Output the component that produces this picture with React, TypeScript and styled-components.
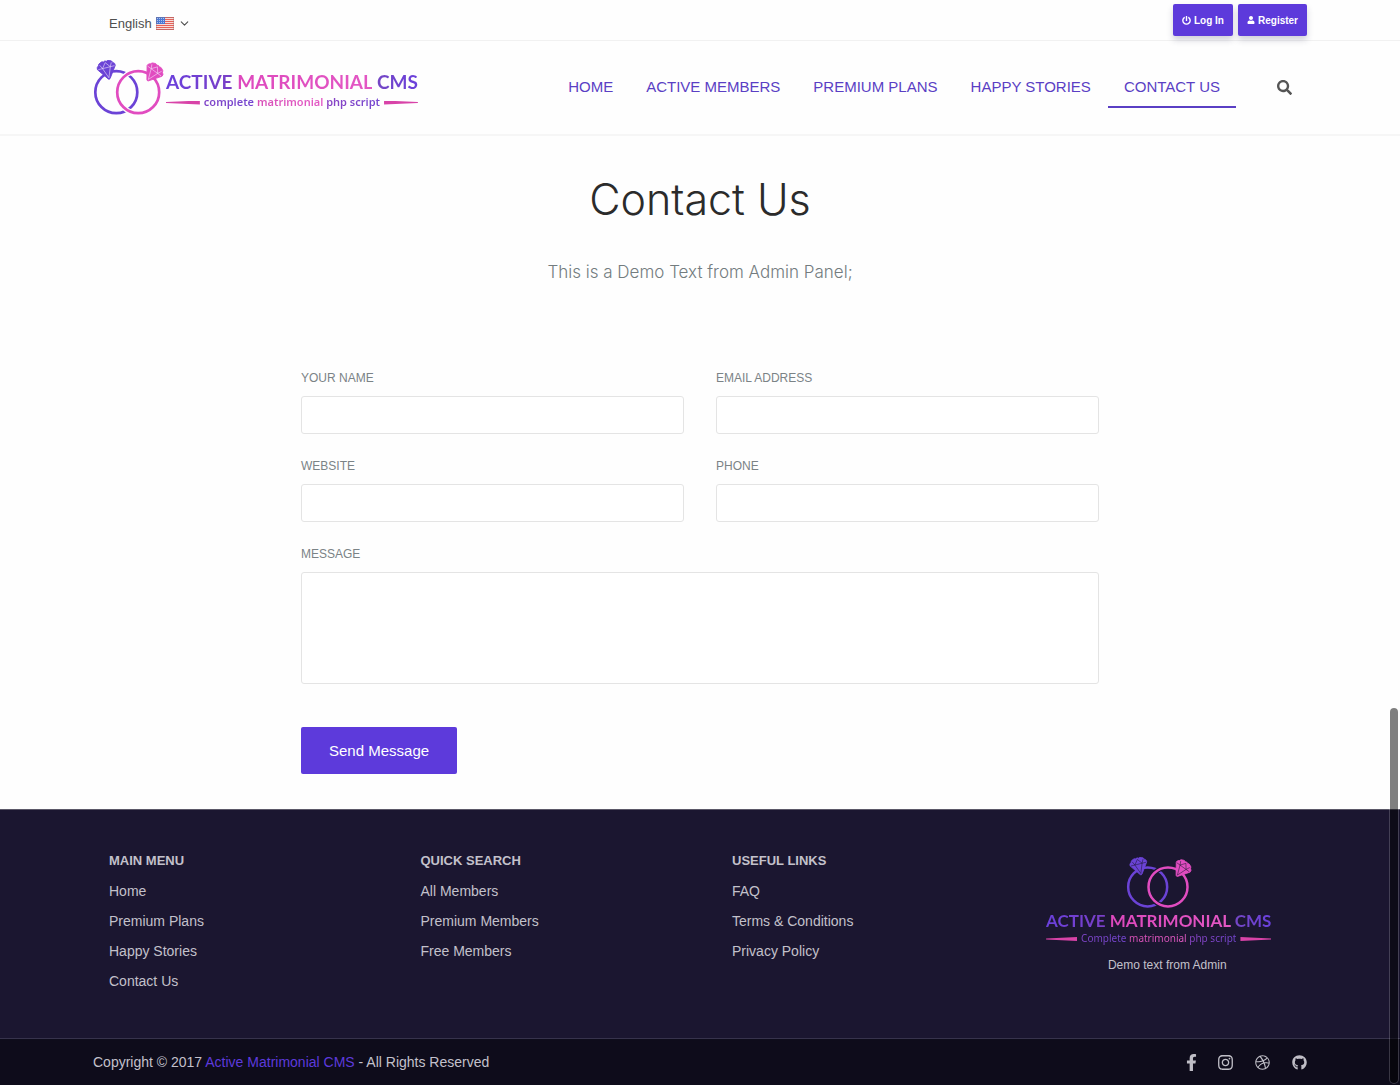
import React, { useId } from "react";
import styled, { createGlobalStyle, css } from "styled-components";
import {
  FaDribbble,
  FaFacebookF,
  FaGithub,
  FaInstagram,
  FaPowerOff,
  FaSearch,
  FaUser,
} from "react-icons/fa";
import { FiChevronDown } from "react-icons/fi";

const PURPLE = "#5d3adb";
const VIOLET = "#6b43d6";
const PINK = "#e14cc0";

const GlobalStyle = createGlobalStyle`
  *, *::before, *::after { box-sizing: border-box; }
  body {
    margin: 0;
    background: #fefefe;
    color: #4a4a4a;
    font-family: "Liberation Sans", Arial, Helvetica, sans-serif;
    font-size: 14px;
  }
  a { color: inherit; text-decoration: none; }
  button, input, textarea { font-family: inherit; }
`;

const Container = styled.div`
  width: 100%;
  max-width: 1246px;
  margin: 0 auto;
  padding: 0 16px;
`;

/* ---------- top bar ---------- */

const TopBar = styled.div`
  border-bottom: 1px solid #f1f1f1;
`;

const TopBarInner = styled(Container)`
  display: flex;
  justify-content: space-between;
  align-items: flex-start;
  height: 40px;
  padding-top: 4px;
`;

const LanguageButton = styled.button`
  display: flex;
  align-items: center;
  gap: 4px;
  height: 38px;
  padding: 0 16px;
  border: 0;
  background: none;
  color: #4f4f4f;
  font-size: 13px;
  cursor: pointer;
`;

const AccountActions = styled.div`
  display: flex;
  gap: 5px;
`;

const AccountLink = styled.a`
  display: flex;
  align-items: center;
  gap: 3px;
  height: 32px;
  padding: 0 9px;
  border-radius: 2px;
  background: ${PURPLE};
  box-shadow: 0 4px 6px rgba(50, 50, 93, 0.22);
  color: #fff;
  font-size: 10px;
  font-weight: 700;
`;

/* ---------- header ---------- */

const Header = styled.header`
  border-bottom: 2px solid #f6f6f6;
`;

const HeaderInner = styled(Container)`
  display: flex;
  justify-content: space-between;
  align-items: center;
  height: 93px;
`;

const Nav = styled.nav`
  display: flex;
  align-items: center;
  gap: 1px;
`;

const NavLink = styled.a<{ $active?: boolean }>`
  padding: 0 16px;
  border-bottom: 2px solid ${({ $active }) => ($active ? "#5a3fc4" : "transparent")};
  color: #5a3fc4;
  font-size: 15px;
  line-height: 38px;
`;

const SearchButton = styled.button`
  display: flex;
  margin-left: 40px;
  margin-right: 15px;
  padding: 0;
  border: 0;
  background: none;
  color: #555;
  cursor: pointer;
`;

/* ---------- logo ---------- */

const LogoLink = styled.a<{ $stacked?: boolean }>`
  display: flex;
  align-items: center;
  gap: 2px;
  ${({ $stacked }) =>
    $stacked &&
    css`
      flex-direction: column;
      padding-right: 17px;
    `}
`;

const LogoWords = styled.span<{ $small?: boolean }>`
  display: flex;
  flex-direction: column;
  padding-top: ${({ $small }) => ($small ? 0 : 6)}px;
`;

const LogoName = styled.span<{ $small?: boolean }>`
  font-family: Lato, "Open Sans", sans-serif;
  font-size: ${({ $small }) => ($small ? 17 : 19)}px;
  line-height: ${({ $small }) => ($small ? 20 : 22)}px;
  font-weight: 700;
  white-space: nowrap;
`;

const LogoTagline = styled.span<{ $small?: boolean }>`
  display: flex;
  align-items: center;
  gap: 4px;
  font-family: "Noto Sans", "Open Sans", sans-serif;
  font-size: ${({ $small }) => ($small ? 10 : 11)}px;
  line-height: ${({ $small }) => ($small ? 14 : 18)}px;
  font-weight: ${({ $small }) => ($small ? 400 : 600)};
  white-space: nowrap;
`;

const Tint = styled.span<{ $from: string; $to: string }>`
  background: linear-gradient(90deg, ${({ $from }) => $from}, ${({ $to }) => $to});
  background-clip: text;
  -webkit-background-clip: text;
  color: transparent;
`;

const Ribbon = styled.span<{ $flip?: boolean }>`
  flex: 1;
  height: 4px;
  margin-top: 2px;
  background: #d843a8;
  clip-path: ${({ $flip }) =>
    $flip
      ? "polygon(0 0, 100% 35%, 100% 65%, 0 100%)"
      : "polygon(0 35%, 100% 0, 100% 100%, 0 65%)"};
`;

function Gem({ x, y, tilt, fill, line }: { x: number; y: number; tilt: number; fill: string; line: string }) {
  return (
    <g transform={`translate(${x} ${y}) rotate(${tilt})`}>
      <path
        d="M-5 -8.5 Q-3 -9.8 -1.5 -8.6 Q0 -10 1.5 -8.6 Q3 -9.8 5 -8.5 Q7 -8 7.4 -6 Q9.6 -5 9.2 -2.6 L1 9 Q0 10 -1 9 L-9.2 -2.6 Q-9.6 -5 -7.4 -6 Q-7 -8 -5 -8.5 Z"
        fill={fill}
        stroke={fill}
        strokeWidth="0.8"
      />
      <path
        d="M-8.4 -2.4 H8.4 M-4 -2.4 L0 8 L4 -2.4 M-4 -2.4 L-6 -6.4 M-4 -2.4 L0 -7.6 L4 -2.4 L6 -6.4"
        fill="none"
        stroke={line}
        strokeWidth="0.7"
        strokeOpacity="0.75"
      />
    </g>
  );
}

function Rings({ width, height, line }: { width: number; height: number; line: string }) {
  const maskId = useId();
  return (
    <svg width={width} height={height} viewBox="0 0 71 56" aria-hidden="true">
      <mask id={maskId} maskUnits="userSpaceOnUse" x="0" y="0" width="71" height="56">
        <rect width="71" height="56" fill="#fff" />
        <circle cx="45.2" cy="32.2" r="21" fill="none" stroke="#000" strokeWidth="5.2" />
      </mask>
      <circle cx="23.3" cy="32.2" r="21" fill="none" stroke={VIOLET} strokeWidth="2.7" mask={`url(#${maskId})`} />
      <circle cx="45.2" cy="32.2" r="21" fill="none" stroke={PINK} strokeWidth="2.7" />
      <Gem x={14} y={10} tilt={-14} fill={VIOLET} line={line} />
      <Gem x={60} y={13} tilt={36} fill={PINK} line={line} />
    </svg>
  );
}

function Logo({ stacked = false }: { stacked?: boolean }) {
  return (
    <LogoLink href="#home" $stacked={stacked} aria-label="Active Matrimonial CMS">
      <Rings width={stacked ? 66 : 71} height={stacked ? 52 : 56} line={stacked ? "#1b1630" : "#f3e6fb"} />
      <LogoWords $small={stacked}>
        <LogoName $small={stacked}>
          <Tint $from="#6a40dc" $to="#7a3fc6">ACTIVE</Tint>{" "}
          <Tint $from="#dd48bd" $to="#e357c4">MATRIMONIAL</Tint>{" "}
          <Tint $from="#7446c4" $to="#6a40dc">CMS</Tint>
        </LogoName>
        <LogoTagline $small={stacked}>
          <Ribbon />
          <span>
            <Tint $from="#8044c8" $to="#7446d0">{stacked ? "Complete" : "complete"}</Tint>{" "}
            <Tint $from="#d850b8" $to="#e45ac6">matrimonial</Tint>{" "}
            <Tint $from="#8a44c4" $to="#7446d0">php script</Tint>
          </span>
          <Ribbon $flip />
        </LogoTagline>
      </LogoWords>
    </LogoLink>
  );
}

function Flag() {
  return (
    <svg width="18" height="13" viewBox="0 0 18 13" aria-hidden="true">
      <rect width="18" height="13" fill="#f7dcd8" />
      {[0, 2, 4, 6, 8, 10, 12].map((y) => (
        <rect key={y} y={y} width="18" height="1" fill="#e5625a" />
      ))}
      <rect width="9" height="7" fill="#4a78d4" />
      {[1, 3, 5].map((y) => (
        <path key={y} d={`M1 ${y + 0.5}H8`} stroke="#a9c2ee" strokeDasharray="1 1" />
      ))}
      <rect x="0.5" y="0.5" width="17" height="12" fill="none" stroke="#8b6f78" strokeOpacity="0.35" />
    </svg>
  );
}

/* ---------- contact form ---------- */

const Main = styled.main`
  width: 100%;
  max-width: 830px;
  margin: 0 auto;
  padding: 36px 16px 35px;
`;

const Title = styled.h1`
  margin: 0 0 32px;
  color: #2b2b2b;
  font-family: Inter, "Liberation Sans", sans-serif;
  font-size: 43px;
  font-weight: 300;
  line-height: 54px;
  text-align: center;
`;

const Subtitle = styled.p`
  margin: 0 0 82px;
  color: #737c7f;
  font-family: Inter, "Liberation Sans", sans-serif;
  font-size: 17px;
  font-weight: 300;
  line-height: 28px;
  text-align: center;
`;

const Form = styled.form`
  display: grid;
  grid-template-columns: 1fr 1fr;
  gap: 22px 32px;
`;

const Field = styled.div<{ $wide?: boolean }>`
  display: flex;
  flex-direction: column;
  gap: 8px;
  ${({ $wide }) => $wide && "grid-column: 1 / -1;"}
`;

const Label = styled.label`
  color: #7b8386;
  font-size: 12px;
  line-height: 20px;
  text-transform: uppercase;
`;

const control = css`
  width: 100%;
  border: 1px solid #e4e4e4;
  border-radius: 3px;
  background: #fff;
  color: #4a4a4a;
  font-size: 14px;
  padding: 8px 12px;
`;

const Input = styled.input`
  ${control}
  height: 38px;
`;

const TextArea = styled.textarea`
  ${control}
  display: block;
  height: 112px;
  resize: none;
`;

const SubmitButton = styled.button`
  justify-self: start;
  height: 47px;
  margin-top: 21px;
  padding: 0 28px;
  border: 0;
  border-radius: 2px;
  background: ${PURPLE};
  color: #fff;
  font-size: 15px;
  cursor: pointer;
`;

/* ---------- footer ---------- */

const Footer = styled.footer`
  border-top: 1px solid #5b5868;
  background: #1b1630;
  color: #c3c1cb;
`;

const FooterColumns = styled(Container)`
  display: grid;
  grid-template-columns: repeat(4, 1fr);
  gap: 32px;
  padding-top: 36px;
  padding-bottom: 42px;
`;

const FooterColumn = styled.div`
  padding-left: 16px;
`;

const FooterHeading = styled.h2`
  margin: 0;
  font-size: 13px;
  font-weight: 700;
  line-height: 30px;
  text-transform: uppercase;
`;

const FooterList = styled.ul`
  margin: 0;
  padding: 0;
  list-style: none;
  font-size: 14px;
  line-height: 30px;
`;

const FooterBrand = styled.div`
  display: flex;
  flex-direction: column;
  align-items: center;
  padding-top: 11px;
`;

const FooterNote = styled.p`
  margin: 10px 0 0;
  font-size: 12px;
  line-height: 20px;
`;

const BottomBar = styled.div`
  border-top: 1px solid #37334c;
  background: #0e0c1b;
`;

const BottomBarInner = styled(Container)`
  display: flex;
  justify-content: space-between;
  align-items: center;
  height: 46px;
`;

const Copyright = styled.p`
  margin: 0;
  line-height: 20px;

  a { color: ${PURPLE}; }
`;

const SocialLinks = styled.div`
  display: flex;
  align-items: center;
  gap: 22px;
  color: #bfbec6;
`;

const SocialLink = styled.a<{ $width: number }>`
  display: flex;
  justify-content: center;
  width: ${({ $width }) => $width}px;

  svg { flex: none; }
`;

/* Overlay scroll indicator, floating above the page edge. */
const ScrollThumb = styled.div`
  position: fixed;
  top: 65.2%;
  right: 1px;
  bottom: 1px;
  width: 10px;
  border: 1px solid rgba(255, 255, 255, 0.18);
  border-radius: 5px;
  background: rgba(0, 0, 0, 0.5);
  background-clip: padding-box;
  pointer-events: none;
`;

const NAV = ["Home", "Active Members", "Premium Plans", "Happy Stories", "Contact Us"];

const FIELDS = [
  { id: "name", label: "Your name", type: "text" },
  { id: "email", label: "Email address", type: "email" },
  { id: "website", label: "Website", type: "text" },
  { id: "phone", label: "Phone", type: "tel" },
];

const FOOTER_MENUS = [
  { title: "Main menu", links: ["Home", "Premium Plans", "Happy Stories", "Contact Us"] },
  { title: "Quick search", links: ["All Members", "Premium Members", "Free Members"] },
  { title: "Useful links", links: ["FAQ", "Terms & Conditions", "Privacy Policy"] },
];

const SOCIAL = [
  { name: "Facebook", Icon: FaFacebookF, width: 10, size: 17 },
  { name: "Instagram", Icon: FaInstagram, width: 14, size: 17 },
  { name: "Dribbble", Icon: FaDribbble, width: 16, size: 15 },
  { name: "GitHub", Icon: FaGithub, width: 15, size: 15 },
];

export default function App() {
  return (
    <>
      <GlobalStyle />
      <TopBar>
        <TopBarInner>
          <LanguageButton type="button">
            English
            <Flag />
            <FiChevronDown size={13} />
          </LanguageButton>
          <AccountActions>
            <AccountLink href="#login">
              <FaPowerOff size={9} />
              Log In
            </AccountLink>
            <AccountLink href="#register">
              <FaUser size={8} />
              Register
            </AccountLink>
          </AccountActions>
        </TopBarInner>
      </TopBar>

      <Header>
        <HeaderInner>
          <Logo />
          <Nav>
            {NAV.map((item) => (
              <NavLink key={item} href="#" $active={item === "Contact Us"}>
                {item.toUpperCase()}
              </NavLink>
            ))}
            <SearchButton type="button" aria-label="Search">
              <FaSearch size={15} />
            </SearchButton>
          </Nav>
        </HeaderInner>
      </Header>

      <Main>
        <Title>Contact Us</Title>
        <Subtitle>This is a Demo Text from Admin Panel;</Subtitle>
        <Form onSubmit={(event) => event.preventDefault()}>
          {FIELDS.map(({ id, label, type }) => (
            <Field key={id}>
              <Label htmlFor={id}>{label}</Label>
              <Input id={id} name={id} type={type} />
            </Field>
          ))}
          <Field $wide>
            <Label htmlFor="message">Message</Label>
            <TextArea id="message" name="message" />
          </Field>
          <SubmitButton type="submit">Send Message</SubmitButton>
        </Form>
      </Main>

      <Footer>
        <FooterColumns>
          {FOOTER_MENUS.map(({ title, links }) => (
            <FooterColumn key={title}>
              <FooterHeading>{title}</FooterHeading>
              <FooterList>
                {links.map((link) => (
                  <li key={link}>
                    <a href="#">{link}</a>
                  </li>
                ))}
              </FooterList>
            </FooterColumn>
          ))}
          <FooterBrand>
            <Logo stacked />
            <FooterNote>Demo text from Admin</FooterNote>
          </FooterBrand>
        </FooterColumns>
        <BottomBar>
          <BottomBarInner>
            <Copyright>
              Copyright © 2017 <a href="#">Active Matrimonial CMS</a> - All Rights Reserved
            </Copyright>
            <SocialLinks>
              {SOCIAL.map(({ name, Icon, width, size }) => (
                <SocialLink key={name} href="#" aria-label={name} $width={width}>
                  <Icon size={size} />
                </SocialLink>
              ))}
            </SocialLinks>
          </BottomBarInner>
        </BottomBar>
      </Footer>
      <ScrollThumb />
    </>
  );
}
